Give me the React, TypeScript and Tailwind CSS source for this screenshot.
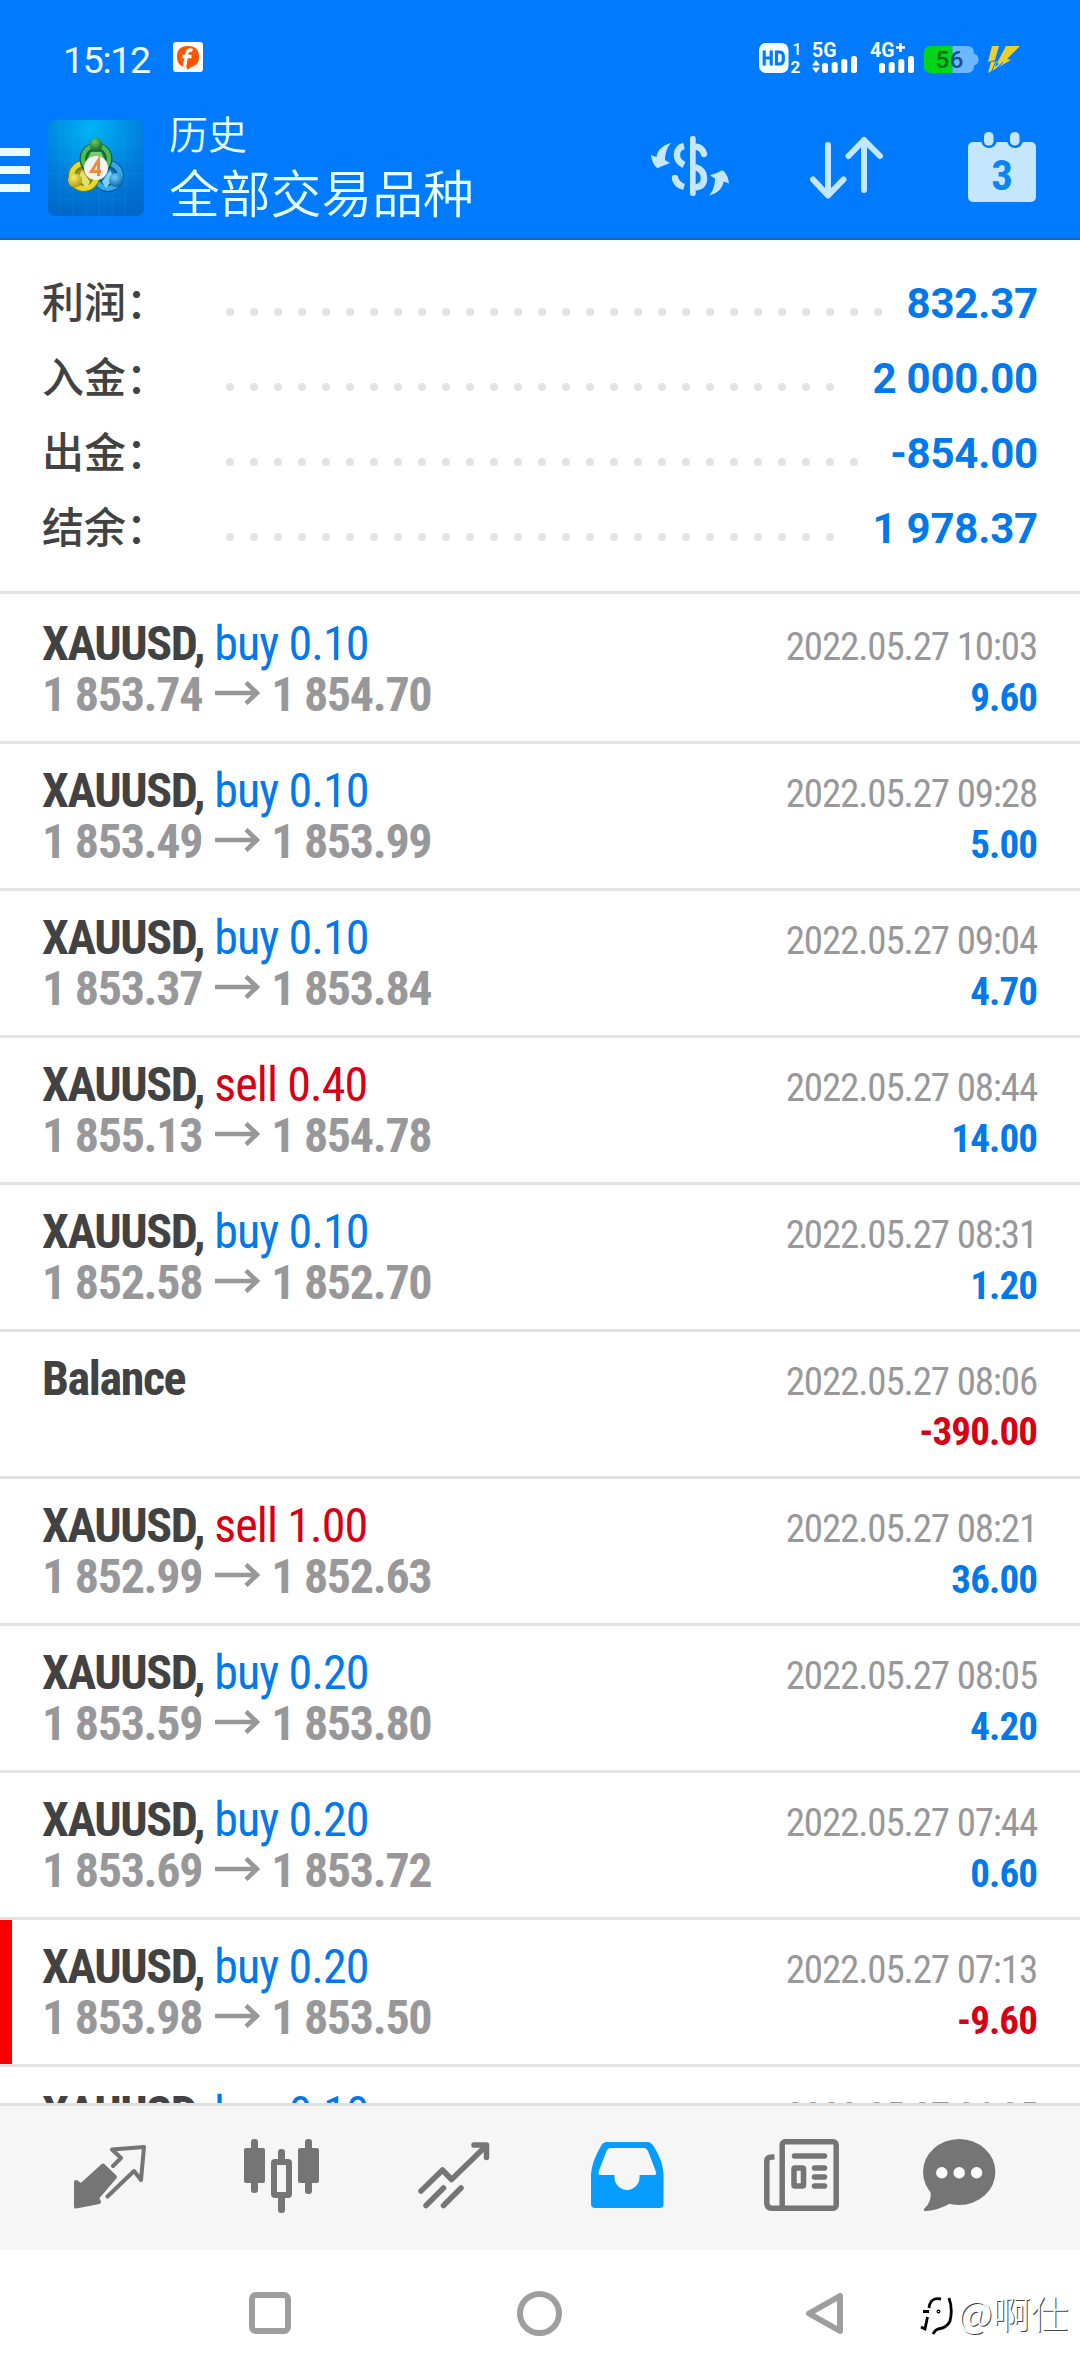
interface SummaryItem {
  label: string;
  value: string;
  dots: number;
}

interface Deal {
  side?: 'buy' | 'sell';
  volume?: string;
  open?: string;
  close?: string;
  time: string;
  profit: string;
  stopped?: boolean;
}

const summary: SummaryItem[] = [
  { label: '利润：', value: '832.37', dots: 28 },
  { label: '入金：', value: '2 000.00', dots: 26 },
  { label: '出金：', value: '-854.00', dots: 27 },
  { label: '结余：', value: '1 978.37', dots: 26 },
];

const deals: Deal[] = [
  { side: 'buy', volume: '0.10', open: '1 853.74', close: '1 854.70', time: '2022.05.27 10:03', profit: '9.60' },
  { side: 'buy', volume: '0.10', open: '1 853.49', close: '1 853.99', time: '2022.05.27 09:28', profit: '5.00' },
  { side: 'buy', volume: '0.10', open: '1 853.37', close: '1 853.84', time: '2022.05.27 09:04', profit: '4.70' },
  { side: 'sell', volume: '0.40', open: '1 855.13', close: '1 854.78', time: '2022.05.27 08:44', profit: '14.00' },
  { side: 'buy', volume: '0.10', open: '1 852.58', close: '1 852.70', time: '2022.05.27 08:31', profit: '1.20' },
  { time: '2022.05.27 08:06', profit: '-390.00' },
  { side: 'sell', volume: '1.00', open: '1 852.99', close: '1 852.63', time: '2022.05.27 08:21', profit: '36.00' },
  { side: 'buy', volume: '0.20', open: '1 853.59', close: '1 853.80', time: '2022.05.27 08:05', profit: '4.20' },
  { side: 'buy', volume: '0.20', open: '1 853.69', close: '1 853.72', time: '2022.05.27 07:44', profit: '0.60' },
  { side: 'buy', volume: '0.20', open: '1 853.98', close: '1 853.50', time: '2022.05.27 07:13', profit: '-9.60', stopped: true },
  { side: 'buy', volume: '0.10', time: '2022.05.27 06:05', profit: '' },
];

function SignalBars({ x }: { x: number }) {
  return (
    <g fill="#fff">
      <rect x={x} y="21" width="6" height="10" rx="2.5" />
      <rect x={x + 9.7} y="20" width="6" height="11" rx="2.5" />
      <rect x={x + 19.3} y="17" width="6" height="14" rx="2.5" />
      <rect x={x + 29} y="14" width="6" height="17" rx="2.5" />
    </g>
  );
}

function StatusBar() {
  return (
    <div className="flex h-[107px] items-start pl-[63px] pr-[60px] pt-[42px]">
      <span className="w-[110px] font-[Roboto] text-[37.5px] leading-[37px] tracking-[-1.3px] text-[#eaffff]">15:12</span>
      <svg className="h-[30px] w-[30px]" viewBox="0 0 30 30">
        <rect width="30" height="30" rx="3" fill="#fff" />
        <path d="M15 4C23 4 26 8 26 15C26 21 23 24 18 25L14 28V25.5C7 25 4 21 4 15C4 8 7 4 15 4Z" fill="#ff5500" />
        <path d="M19.5 8.5C16 7 14 9 13.5 13L11.5 25M9.5 14.5H18.5" fill="none" stroke="#fff" strokeWidth="3.4" />
      </svg>

      <div className="ml-auto flex items-start">
        <svg className="h-[31px] w-[43px] overflow-visible" viewBox="0 0 43 31">
          <rect y="1" width="29.5" height="30" rx="7" fill="#f4ffff" />
          <path d="M5.2 8.500V23.500M12.200 8.500V23.500M5.200 16H12.200M17.500 10H20Q24.300 10 24.300 14V18Q24.300 22 20 22H17.500Z" fill="none" stroke="#007bff" strokeWidth="3.200" />
          <text x="33.500" y="12.500" fill="#fff" fontFamily="Roboto" fontWeight="500" fontSize="16">1</text>
          <text x="31.500" y="31" fill="#fff" fontFamily="Roboto" fontWeight="700" fontSize="17">2</text>
        </svg>
        <svg className="ml-[10px] h-[31px] w-[46px] overflow-visible" viewBox="0 0 46 31">
          <text x="0" y="15" fill="#fff" fontFamily="Roboto" fontWeight="700" fontSize="19.5">5G</text>
          <path d="M0 23.5L4 18L8 23.5ZM0 25.500L4 31L8 25.500Z" fill="#fff" />
          <SignalBars x={10} />
        </svg>
        <svg className="ml-[12px] h-[31px] w-[46px] overflow-visible" viewBox="0 0 46 31">
          <text x="0" y="15" fill="#fff" fontFamily="Roboto" fontWeight="700" fontSize="19.5">4G</text>
          <path d="M30.500 1V10M26 5.500H35" stroke="#fff" strokeWidth="2.600" />
          <SignalBars x={9} />
        </svg>
        <svg className="ml-[8px] h-[31px] w-[55px]" viewBox="0 0 55 31">
          <path d="M7 4H28.500V31H7Q0 31 0 24V11Q0 4 7 4Z" fill="#00d619" />
          <path d="M28.500 4H43Q50 4 50 11V24Q50 31 43 31H28.500Z" fill="#6cb8ff" />
          <path d="M50 11.500Q54.500 13 54.500 17.500T50 23.500Z" fill="#6cb8ff" />
          <text x="11.500" y="26" fill="#0b6b17" fontFamily="Roboto" fontWeight="500" fontSize="24">5</text>
          <text x="25.800" y="26" fill="#1c4f8a" fontFamily="Roboto" fontWeight="500" fontSize="24">6</text>
        </svg>
        <svg className="ml-[8px] h-[31px] w-[33px]" viewBox="0 0 33 31">
          <path d="M5 4H12L8 18L1 20Z M19 4H33L20 17L24 18L1 31L4 20L10 19L8 25L12 22L10 21Z" fill="#ecd028" />
          <path d="M4 31L9 19M6 30L16 20" stroke="#007bff" strokeWidth="1" />
        </svg>
      </div>
    </div>
  );
}

function AppLogo() {
  return (
    <svg className="mt-[13px] h-24 w-24" viewBox="0 0 96 96">
      <defs>
        <radialGradient id="tile" cx="0.45" cy="0.1" r="0.9">
          <stop offset="0" stopColor="#00b4f5" />
          <stop offset="0.6" stopColor="#007fdc" />
          <stop offset="1" stopColor="#0068c8" />
        </radialGradient>
        <radialGradient id="green" cx="0.4" cy="0.3" r="0.7">
          <stop offset="0" stopColor="#6fc765" />
          <stop offset="1" stopColor="#0f6b2e" />
        </radialGradient>
        <radialGradient id="yellow" cx="0.4" cy="0.3" r="0.7">
          <stop offset="0" stopColor="#f7ee6a" />
          <stop offset="1" stopColor="#b39a10" />
        </radialGradient>
        <radialGradient id="blue" cx="0.4" cy="0.3" r="0.7">
          <stop offset="0" stopColor="#6fd0fb" />
          <stop offset="1" stopColor="#0a68b0" />
        </radialGradient>
      </defs>
      <rect width="96" height="96" rx="7" fill="url(#tile)" />
      <path d="M12 0V96M25 0V96M38 0V96M51 0V96M64 0V96M77 0V96M0 14H96M0 27H96M0 40H96M0 53H96M0 66H96M0 79H96" stroke="#35b8ff" strokeOpacity="0.13" />
      <circle cx="60" cy="56" r="12" fill="#0d74bd" stroke="#085592" strokeWidth="8" />
      <circle cx="60" cy="56" r="12.500" fill="none" stroke="#35a9e6" strokeWidth="5" />
      <circle cx="36" cy="56" r="12" fill="#9b9418" stroke="#7d7a10" strokeWidth="8" />
      <circle cx="36" cy="56" r="12.500" fill="none" stroke="#e4d930" strokeWidth="5" />
      <circle cx="48" cy="39" r="13" fill="#1d7c3c" stroke="#0d6437" strokeWidth="7" />
      <circle cx="48" cy="38.500" r="13" fill="none" stroke="#4fb854" strokeWidth="4.500" />
      <path d="M38 42L43 32H53L58 42Z" fill="#7ccb72" />
      <path d="M30 58L34 50L42 62L38 68Z" fill="#e8e06a" />
      <path d="M66 58L62 50L54 62L58 68Z" fill="#7fd0f5" />
      <circle cx="48" cy="24.500" r="6.500" fill="url(#green)" />
      <circle cx="27" cy="60.500" r="7" fill="url(#yellow)" />
      <circle cx="68" cy="60" r="7" fill="url(#blue)" />
      <circle cx="48" cy="48" r="12" fill="#f2f2ee" />
      <path d="M50.500 56V40L43.500 51.500H53" fill="none" stroke="#f08a3c" strokeWidth="3" />
    </svg>
  );
}

function Header() {
  return (
    <header className="h-60 border-b-2 border-[#0a68cc] bg-[#007bff]">
      <StatusBar />
      <div className="flex items-start">
        <div className="mr-[18px] flex w-[30px] flex-col gap-[10px] pt-[41px]">
          <div className="h-2 bg-[#eaffff]" />
          <div className="h-2 bg-[#eaffff]" />
          <div className="h-2 bg-[#eaffff]" />
        </div>
        <AppLogo />
        <div className="ml-[25px] font-['Noto_Sans_CJK_SC',sans-serif] font-[350] text-[#e6ffff]">
          <div className="text-[39px] leading-[50px]">历史</div>
          <div className="whitespace-nowrap text-[50.8px] leading-[69px]">全部交易品种</div>
        </div>

        <svg className="ml-auto mt-[29px] h-[60px] w-[78px]" viewBox="0 0 78 60" fill="#c5e6ff">
          <rect x="39" y="0" width="5.700" height="60" rx="2.500" />
          <path d="M20 7C12 9 6 14 5.500 21L0 19Q1 27 5 31Q7 33 9 31L19 27L14 24C14 18 16 11 20 7Z" />
          <path d="M20 7C12 9 6 14 5.500 21L0 19Q1 27 5 31Q7 33 9 31L19 27L14 24C14 18 16 11 20 7Z" transform="rotate(180 39 33.300)" />
          <g fill="none" stroke="#c5e6ff" strokeWidth="6.500">
            <path d="M33 10C24 12 23 24 33 29" />
            <path d="M44 10.500C49 11 52 13 53 18" strokeLinecap="round" />
            <path d="M24 42C25 47 28 49.500 33 51" />
            <path d="M44 31C51 33 53 38 53 42C53 48 50 51 44 51.500" />
          </g>
          <circle cx="24" cy="42" r="3.200" />
        </svg>
        <svg className="ml-[81px] mt-[29px] h-[64px] w-[73px]" viewBox="0 0 73 64" fill="none" stroke="#c5e6ff" strokeWidth="6" strokeLinecap="round" strokeLinejoin="round">
          <path d="M18 9V59M3 43.500L18 59.500L33.500 43.500" />
          <path d="M54 54V4M38.500 20L54 4L70 20" />
        </svg>
        <svg className="ml-[85px] mr-11 mt-[25px] h-[70px] w-[68px]" viewBox="0 0 68 70">
          <rect y="10" width="68" height="60" rx="5" fill="#c5e6ff" />
          <rect x="13" y="-3" width="16" height="19" rx="8" fill="#007bff" />
          <rect x="39" y="-3" width="16" height="19" rx="8" fill="#007bff" />
          <rect x="16" y="0" width="9.500" height="13.500" rx="4.500" fill="#c5e6ff" />
          <rect x="42" y="0" width="9.500" height="13.500" rx="4.500" fill="#c5e6ff" />
          <text x="34" y="57.500" textAnchor="middle" fill="#0a84f5" fontFamily="Roboto Condensed" fontWeight="700" fontSize="43">3</text>
        </svg>
      </div>
    </header>
  );
}

function Summary() {
  return (
    <section className="h-[354px] border-b-[3px] border-[#e3e3e3] px-[42px] pt-[26px]">
      {summary.map((item) => (
        <div key={item.label} className="flex h-[75px] items-center">
          <div className="w-[184px] pb-2 font-['Noto_Sans_CJK_SC',sans-serif] text-[42px] font-medium leading-[60px] text-[#424242]">
            {item.label}
          </div>
          <div className="flex gap-4 pt-4">
            {Array.from({ length: item.dots }, (_, i) => (
              <span key={i} className="size-2 rounded-full bg-[#e3e3e3]" />
            ))}
          </div>
          <div className="ml-auto font-[Roboto] text-[42px] font-bold leading-[60px] tracking-[-0.2px] text-[#0279eb]">
            {item.value}
          </div>
        </div>
      ))}
    </section>
  );
}

function DealRow({ deal, first }: { deal: Deal; first: boolean }) {
  const sideColor = deal.side === 'sell' ? 'text-[#d80014]' : 'text-[#0279eb]';
  const profitColor = deal.profit.startsWith('-') ? 'text-[#d80014]' : 'text-[#0279eb]';

  return (
    <div
      className={`flex border-b-[3px] border-[#e3e3e3] font-['Roboto_Condensed'] leading-[51px] ${
        first ? 'h-[150px]' : 'h-[147px]'
      }`}
    >
      <div className={`w-3 ${deal.stopped ? 'bg-[#f80000]' : ''}`} />
      <div className={`flex-1 pl-[30px] pr-[43px] ${first ? 'pt-6' : 'pt-[21px]'}`}>
        <div className="flex h-[51px] items-baseline justify-between">
          <div className="text-[48px]">
            <span className="font-bold tracking-[-1.4px] text-[#424242]">{deal.side ? 'XAUUSD,' : 'Balance'}</span>
            {deal.side && <span className={`tracking-[-0.9px] ${sideColor}`}> {deal.side} {deal.volume}</span>}
          </div>
          <div className="text-[39px] tracking-[-1.15px] text-[#98989a]">{deal.time}</div>
        </div>
        <div className="flex h-[51px] items-baseline text-[48px] font-bold tracking-[-1.3px] text-[#98989a]">
          {deal.open && (
            <>
              <span>{deal.open}</span>
              <svg className="ml-[13px] mr-[10px] h-6 w-[46px] -translate-y-[6px]" viewBox="0 0 46 24" fill="none" stroke="#98989a" strokeWidth="4.500">
                <path d="M0 12H42M31 1.500L42 12L31 22.500" />
              </svg>
              <span>{deal.close}</span>
            </>
          )}
          <span className={`ml-auto text-[39px] tracking-[-0.9px] ${deal.open ? '' : 'pt-[3px]'} ${profitColor}`}>
            {deal.profit}
          </span>
        </div>
      </div>
    </div>
  );
}

function TabBar() {
  return (
    <nav className="flex h-[147px] items-start border-t-[3px] border-[#e0e0e0] bg-[#f6f6f6] pl-[74px]">
      {/* quotes */}
      <svg className="mt-[39px] h-[64px] w-[73px]" viewBox="0 0 73 64" stroke="#757575" strokeLinejoin="round" strokeLinecap="round">
        <path d="M39 21L47 13L38 4.500L70 2L67 35L60 26L33.500 51.500" fill="none" stroke="#757575" strokeWidth="4" />
        <path d="M29 20.500L41 32L23 53L25 57L2 61.500L2 37L7 40.500Z" fill="#757575" strokeWidth="4" />
      </svg>
      {/* chart */}
      <svg className="ml-[97px] mt-[33px] h-[75px] w-[75px]" viewBox="0 0 75 75" fill="#757575">
        <rect x="7" width="7" height="54" rx="3" />
        <rect y="9" width="21" height="35" rx="2" />
        <rect x="34" y="10" width="7" height="14" rx="3" />
        <rect x="34" y="55" width="7" height="19" rx="3" />
        <rect x="30" y="23" width="15" height="33" rx="1" fill="none" stroke="#757575" strokeWidth="6" />
        <rect x="61" width="7" height="55" rx="3" />
        <rect x="54" y="9" width="21" height="35" rx="2" />
      </svg>
      {/* trade */}
      <svg className="ml-[99px] mt-[36px] h-[67px] w-[72px]" viewBox="0 0 72 67" fill="none" stroke="#757575" strokeWidth="5.500" strokeLinecap="round" strokeLinejoin="round">
        <path d="M3 49L24.500 28L33.500 37.500L68 4" />
        <path d="M56 3H68.500V15.500" />
        <path d="M8 63.500L25.500 46M25.500 63.500L43 46" />
      </svg>
      {/* history, active */}
      <svg className="ml-[101px] mt-[36px] h-[66px] w-[73px]" viewBox="0 0 73 66" fill="#069dff">
        <path
          fillRule="evenodd"
          d="M16 0H56Q60 0 62.500 4Q72 19 72.500 32V62Q72.500 66 68.500 66H4Q0 66 0 62V32Q1 19 10 4Q12 0 16 0ZM20 6Q17 6 15.500 9L7.500 30Q7 33 9.500 33H23.500V35.500A12.500 12.500 0 0 0 48.500 35.500V33H63Q66 33 65 30L57 9Q55.500 6 53 6Z"
        />
      </svg>
      {/* news */}
      <svg className="ml-[100px] mt-[33px] h-[72px] w-[75px]" viewBox="0 0 75 72" fill="none" stroke="#757575" strokeWidth="5.500">
        <rect x="18.200" y="2.800" width="54" height="66.500" rx="3" />
        <path d="M10.500 18H8Q2.800 18 2.800 22V64Q2.800 69.200 8 69.200H20" />
        <path d="M30.500 17H60.500M50.500 29H60.500M50.500 38H60.500M50.500 47H60.500" strokeLinecap="round" />
        <rect x="30" y="29" width="9.500" height="18" rx="1" />
      </svg>
      {/* messages */}
      <svg className="ml-[84px] mt-[33px] h-[72px] w-[73px]" viewBox="0 0 73 72" fill="#757575">
        <ellipse cx="36.200" cy="33" rx="36.200" ry="33" />
        <path d="M7 50Q10 62 1 70Q0 72 3 72Q16 71 28 64Z" />
        <circle cx="18.800" cy="33.700" r="5.700" fill="#fff" />
        <circle cx="36.200" cy="33.700" r="5.700" fill="#fff" />
        <circle cx="53.600" cy="33.700" r="5.700" fill="#fff" />
      </svg>
    </nav>
  );
}

function SystemNav() {
  return (
    <div className="relative flex h-[126px] items-center bg-white pl-[249px]">
      <div className="size-[42px] rounded-[7px] border-[6px] border-[#9e9e9e]" />
      <div className="ml-[226px] size-[45px] rounded-full border-[6px] border-[#9e9e9e]" />
      <svg className="ml-[243px] h-[43px] w-[39px]" viewBox="0 0 39 43" fill="none" stroke="#9e9e9e" strokeWidth="6" strokeLinejoin="round">
        <path d="M35 4V39L4 21.500Z" />
      </svg>

      <div className="absolute left-[920px] top-[39px] flex items-center">
        <svg className="mt-[6px] h-[40px] w-[34px]" viewBox="0 0 34 40" fill="none" stroke="#000" strokeWidth="2.800">
          <path d="M21 4Q10 2 9 13M3 16.500H9M7.500 22L5 34L1 32" />
          <path d="M29 3Q33 14 30 26Q27 33 18 34Q15 35 13 39" />
          <circle cx="18.500" cy="16.500" r="0.600" />
        </svg>
        <span className="ml-[4px] whitespace-nowrap font-['Noto_Sans_CJK_SC',sans-serif] text-[38px] font-light leading-[46px] text-white [text-shadow:1px_1px_0_#444]">
          @啊仕
        </span>
      </div>
    </div>
  );
}

export default function App() {
  return (
    <div className="flex h-[2376px] w-[1080px] flex-col overflow-hidden bg-white">
      <Header />
      <Summary />
      <main className="h-[1509px] overflow-hidden">
        {deals.map((deal, i) => (
          <DealRow key={deal.time} deal={deal} first={i === 0} />
        ))}
      </main>
      <TabBar />
      <SystemNav />
    </div>
  );
}
